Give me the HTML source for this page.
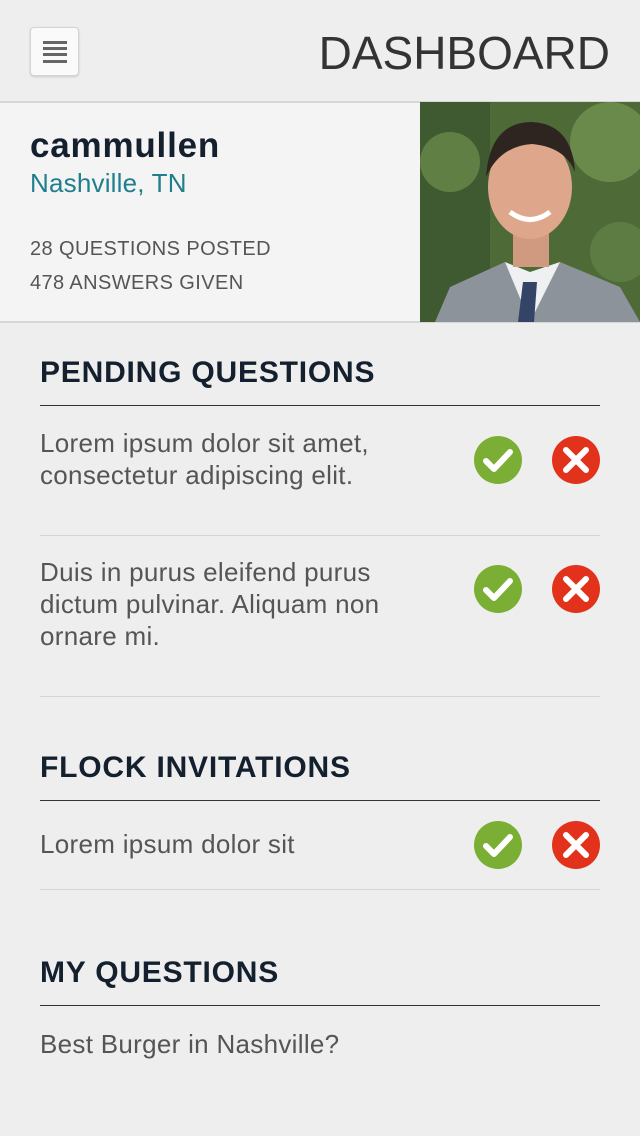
<!DOCTYPE html>
<html><head><meta charset="utf-8"><style>
*{margin:0;padding:0;box-sizing:border-box}
body{width:640px;height:1136px;background:#eeeeee;font-family:"Liberation Sans",sans-serif;position:relative;overflow:hidden}
.a{position:absolute}
.menu{left:30px;top:27px;width:49px;height:49px;background:#fafafa;border:1px solid #d4d4d4;border-radius:4px;box-shadow:0 1px 2px rgba(0,0,0,.15)}
.menu i{position:absolute;left:12px;width:24px;height:3px;background:#666}
.h{font-weight:bold;color:#14202e;font-size:30px;left:40px;letter-spacing:0.8px}
.line{left:40px;width:560px;height:1px}
.t{left:40px;color:#555;font-size:26px;line-height:32px;letter-spacing:0.3px}
</style></head><body>
<div class="a menu"><i style="top:13px"></i><i style="top:19px"></i><i style="top:25px"></i><i style="top:32px"></i></div>
<div class="a" style="right:30px;top:26px;font-size:46px;color:#333">DASHBOARD</div>
<div class="a" style="left:0;top:101px;width:640px;height:222px;background:#f4f4f4;border-top:2px solid #d6d6d6;border-bottom:2px solid #d6d6d6"></div>
<div class="a" style="left:30px;top:126px;font-size:35px;font-weight:bold;color:#14202e;letter-spacing:0.8px">cammullen</div>
<div class="a" style="left:30px;top:168px;font-size:26px;color:#1f7f8c;letter-spacing:0.2px">Nashville, TN</div>
<div class="a" style="left:30px;top:238px;font-size:20px;color:#555;letter-spacing:0.4px">28 QUESTIONS POSTED</div>
<div class="a" style="left:30px;top:272px;font-size:20px;color:#555;letter-spacing:0.4px">478 ANSWERS GIVEN</div>
<svg class="a" style="left:420px;top:102px" width="220" height="220" viewBox="0 0 220 220">
<rect width="220" height="220" fill="#4d6a37"/>
<rect x="0" y="0" width="70" height="220" fill="#3f5a30"/>
<circle cx="30" cy="60" r="30" fill="#5f7f45"/><circle cx="190" cy="40" r="40" fill="#6a8a4c"/><circle cx="200" cy="150" r="30" fill="#5d7c43"/>
<path d="M15 220 L30 185 L85 160 L110 175 L140 160 L200 185 L220 220 Z" fill="#8d939a"/>
<path d="M85 160 L110 220 L140 160 L110 170 Z" fill="#eef0f2"/>
<path d="M103 180 L117 180 L114 220 L98 220 Z" fill="#334466"/>
<rect x="93" y="120" width="36" height="45" fill="#d09a80"/>
<ellipse cx="110" cy="85" rx="42" ry="52" fill="#dea78b"/>
<path d="M66 75 Q70 20 112 20 Q152 22 155 70 Q145 45 112 42 Q80 44 66 75Z" fill="#2e2520"/>
<path d="M90 110 Q110 125 130 110" stroke="#fff" stroke-width="5" fill="none"/>
</svg>
<div class="a h" style="top:356px">PENDING QUESTIONS</div>
<div class="a line" style="top:405px;background:#333"></div>
<div class="a t" style="top:427px">Lorem ipsum dolor sit amet,<br>consectetur adipiscing elit.</div>
<div class="a line" style="top:535px;background:#d4d4d4"></div>
<div class="a t" style="top:556px">Duis in purus eleifend purus<br>dictum pulvinar. Aliquam non<br>ornare mi.</div>
<div class="a line" style="top:696px;background:#d4d4d4"></div>
<div class="a h" style="top:751px">FLOCK INVITATIONS</div>
<div class="a line" style="top:800px;background:#333"></div>
<div class="a t" style="top:828px">Lorem ipsum dolor sit</div>
<div class="a line" style="top:889px;background:#d4d4d4"></div>
<div class="a h" style="top:956px">MY QUESTIONS</div>
<div class="a line" style="top:1005px;background:#333"></div>
<div class="a t" style="top:1028px">Best Burger in Nashville?</div>
<svg class="a" style="left:0;top:0" width="640" height="1136">
<defs>
<g id="ok"><circle r="24" fill="#7aae34"/><path d="M-12 1 L-4 9 L12 -8" stroke="#fff" stroke-width="6" stroke-linecap="round" stroke-linejoin="round" fill="none"/></g>
<g id="no"><circle r="24" fill="#e2321c"/><path d="M-10 -10 L10 10 M10 -10 L-10 10" stroke="#fff" stroke-width="6" stroke-linecap="round" fill="none"/></g>
</defs>
<use href="#ok" x="498" y="460"/><use href="#no" x="576" y="460"/>
<use href="#ok" x="498" y="589"/><use href="#no" x="576" y="589"/>
<use href="#ok" x="498" y="845"/><use href="#no" x="576" y="845"/>
</svg>
</body></html>
